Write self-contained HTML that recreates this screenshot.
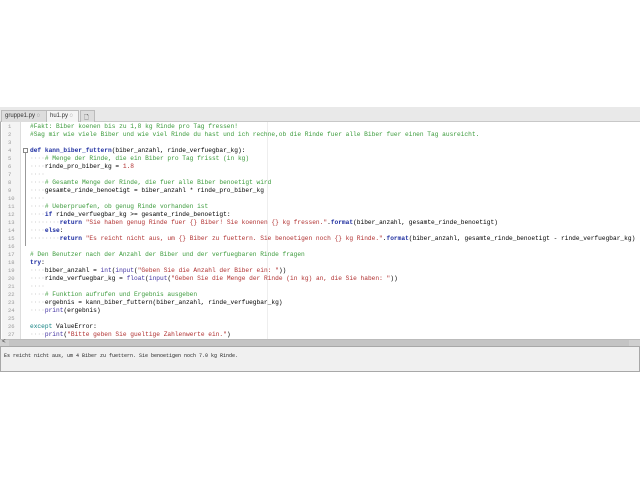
<!DOCTYPE html>
<html><head><meta charset="utf-8"><style>
*{margin:0;padding:0;box-sizing:border-box}
body{width:640px;height:480px;background:#fff;position:relative;overflow:hidden;font-family:"Liberation Mono",monospace}
#tabs{position:absolute;left:0;top:107px;width:640px;height:15px;background:#e9e9e9;border-bottom:1px solid #c8c8c8}
.tab{position:absolute;top:3px;height:12px;font:6px "Liberation Sans",sans-serif;color:#333;padding:2px 3px;border:1px solid #bbb;border-bottom:none;background:#ddd}
#ed{position:absolute;left:0;top:122px;width:640px;height:217px;background:#fff;border-left:1px solid #aaa}
#gut{position:absolute;left:1px;top:0;width:19px;height:217px;background:#f4f4f4;border-right:1px solid #ddd}
.ln{position:absolute;left:7px;font-size:5.5px;color:#999;line-height:8px}
.l{position:absolute;left:29px;font-size:6.2px;line-height:8px;white-space:pre;color:#000}
.c{color:#3a9a3a}.k{color:#1a2aa0;font-weight:bold}.s{color:#b03030}.d{color:#bbb}.f{color:#2030a0;font-weight:bold}.p{color:#4030a0}.e{color:#108080}.n{color:#b03030}
#sb{position:absolute;left:0;top:339px;width:640px;height:7px;background:#cfcfcf;border-top:1px solid #bbb}
#out{position:absolute;left:0;top:346px;width:640px;height:26px;background:#f0f0f0;border:1px solid #a8a8a8;font-size:5px;padding:6px 3px;color:#222;white-space:pre}
</style></head><body>
<div id="tabs">
<div class="tab" style="left:1px;width:46px">gruppe1.py ◌</div>
<div class="tab" style="left:46px;width:33px;background:#f4f4f4">hu1.py ◌</div>
<div class="tab" style="left:80px;width:15px">🗋</div>
</div>
<div id="ed">
<div id="gut"></div>
<div style="position:absolute;left:22px;top:26px;width:5px;height:5px;border:1px solid #888"></div>
<div style="position:absolute;left:24px;top:31px;width:1px;height:93px;background:#999"></div>
<div style="position:absolute;left:266px;top:0;width:1px;height:217px;background:#eee"></div>
<div class="ln" style="top:1px">1</div><div class="ln" style="top:9px">2</div><div class="ln" style="top:17px">3</div><div class="ln" style="top:25px">4</div><div class="ln" style="top:33px">5</div><div class="ln" style="top:41px">6</div><div class="ln" style="top:49px">7</div><div class="ln" style="top:57px">8</div><div class="ln" style="top:65px">9</div><div class="ln" style="top:73px">10</div><div class="ln" style="top:81px">11</div><div class="ln" style="top:89px">12</div><div class="ln" style="top:97px">13</div><div class="ln" style="top:105px">14</div><div class="ln" style="top:113px">15</div><div class="ln" style="top:121px">16</div><div class="ln" style="top:129px">17</div><div class="ln" style="top:137px">18</div><div class="ln" style="top:145px">19</div><div class="ln" style="top:153px">20</div><div class="ln" style="top:161px">21</div><div class="ln" style="top:169px">22</div><div class="ln" style="top:177px">23</div><div class="ln" style="top:185px">24</div><div class="ln" style="top:193px">25</div><div class="ln" style="top:201px">26</div><div class="ln" style="top:209px">27</div>
<div class="l c" style="top:1px">#Fakt: Biber koenen bis zu 1,8 kg Rinde pro Tag fressen!</div>
<div class="l c" style="top:9px">#Sag mir wie viele Biber und wie viel Rinde du hast und ich rechne,ob die Rinde fuer alle Biber fuer einen Tag ausreicht.</div>
<div class="l" style="top:25px"><span class="k">def</span> <span class="f">kann_biber_futtern</span>(biber_anzahl, rinde_verfuegbar_kg):</div>
<div class="l" style="top:33px"><span class="d">····</span><span class="c"># Menge der Rinde, die ein Biber pro Tag frisst (in kg)</span></div>
<div class="l" style="top:41px"><span class="d">····</span>rinde_pro_biber_kg = <span class="n">1.8</span></div>
<div class="l" style="top:49px"><span class="d">····</span></div>
<div class="l" style="top:57px"><span class="d">····</span><span class="c"># Gesamte Menge der Rinde, die fuer alle Biber benoetigt wird</span></div>
<div class="l" style="top:65px"><span class="d">····</span>gesamte_rinde_benoetigt = biber_anzahl * rinde_pro_biber_kg</div>
<div class="l" style="top:73px"><span class="d">····</span></div>
<div class="l" style="top:81px"><span class="d">····</span><span class="c"># Ueberpruefen, ob genug Rinde vorhanden ist</span></div>
<div class="l" style="top:89px"><span class="d">····</span><span class="k">if</span> rinde_verfuegbar_kg &gt;= gesamte_rinde_benoetigt:</div>
<div class="l" style="top:97px"><span class="d">········</span><span class="k">return</span> <span class="s">"Sie haben genug Rinde fuer {} Biber! Sie koennen {} kg fressen."</span>.<span class="f">format</span>(biber_anzahl, gesamte_rinde_benoetigt)</div>
<div class="l" style="top:105px"><span class="d">····</span><span class="k">else</span>:</div>
<div class="l" style="top:113px"><span class="d">········</span><span class="k">return</span> <span class="s">"Es reicht nicht aus, um {} Biber zu fuettern. Sie benoetigen noch {} kg Rinde."</span>.<span class="f">format</span>(biber_anzahl, gesamte_rinde_benoetigt - rinde_verfuegbar_kg)</div>
<div class="l c" style="top:129px"># Den Benutzer nach der Anzahl der Biber und der verfuegbaren Rinde fragen</div>
<div class="l" style="top:137px"><span class="k">try</span>:</div>
<div class="l" style="top:145px"><span class="d">····</span>biber_anzahl = <span class="p">int</span>(<span class="p">input</span>(<span class="s">"Geben Sie die Anzahl der Biber ein: "</span>))</div>
<div class="l" style="top:153px"><span class="d">····</span>rinde_verfuegbar_kg = <span class="p">float</span>(<span class="p">input</span>(<span class="s">"Geben Sie die Menge der Rinde (in kg) an, die Sie haben: "</span>))</div>
<div class="l" style="top:161px"><span class="d">····</span></div>
<div class="l" style="top:169px"><span class="d">····</span><span class="c"># Funktion aufrufen und Ergebnis ausgeben</span></div>
<div class="l" style="top:177px"><span class="d">····</span>ergebnis = kann_biber_futtern(biber_anzahl, rinde_verfuegbar_kg)</div>
<div class="l" style="top:185px"><span class="d">····</span><span class="p">print</span>(ergebnis)</div>
<div class="l" style="top:201px"><span class="e">except</span> ValueError:</div>
<div class="l" style="top:209px"><span class="d">····</span><span class="p">print</span>(<span class="s">"Bitte geben Sie gueltige Zahlenwerte ein."</span>)</div>
</div>
<div id="sb"><span style="position:absolute;left:2px;top:-2px;font-size:6px;color:#333">&lt;</span><div style="position:absolute;left:9px;top:0;width:620px;height:6px;background:#c4c4c4"></div></div>
<div id="out">Es reicht nicht aus, um 4 Biber zu fuettern. Sie benoetigen noch 7.0 kg Rinde.</div>
</body></html>
